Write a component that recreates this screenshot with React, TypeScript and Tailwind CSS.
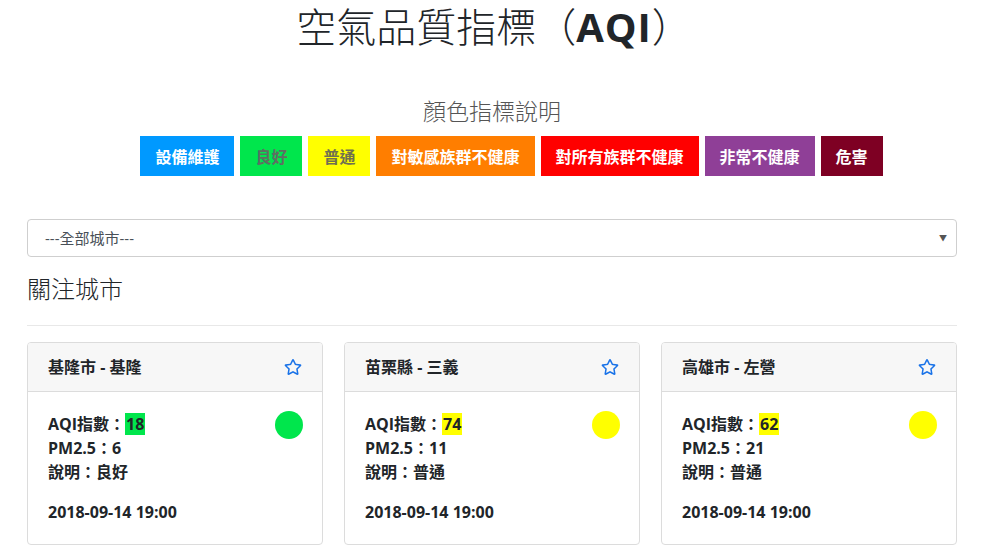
import React from "react";
import { FaRegStar } from "react-icons/fa";

const legend = [
  { t: "設備維護", bg: "bg-[#0099ff]", c: "text-white" },
  { t: "良好", bg: "bg-[#00e64c]", c: "text-[#5f6e63]" },
  { t: "普通", bg: "bg-[#ffff00]", c: "text-[#707050]" },
  { t: "對敏感族群不健康", bg: "bg-[#ff7e00]", c: "text-white" },
  { t: "對所有族群不健康", bg: "bg-[#ff0000]", c: "text-white" },
  { t: "非常不健康", bg: "bg-[#8f3f97]", c: "text-white" },
  { t: "危害", bg: "bg-[#7e0023]", c: "text-white" },
];

const cards = [
  { name: "基隆市 - 基隆", aqi: "18", pm: "6", desc: "良好", color: "bg-[#00e64c]" },
  { name: "苗栗縣 - 三義", aqi: "74", pm: "11", desc: "普通", color: "bg-[#ffff00]" },
  { name: "高雄市 - 左營", aqi: "62", pm: "21", desc: "普通", color: "bg-[#ffff00]" },
];

export default function App() {
  return (
    <div
      className="w-[998px] h-[554px] overflow-hidden bg-white text-[#212529]"
      style={{ fontFamily: '"Open Sans", "Noto Sans CJK TC", sans-serif' }}
    >
      <div className="ml-[27px] w-[930px]">
        <h1 className="text-center text-[40px] leading-[54px] font-light pl-[4px]">
          空氣品質指標（<span className="font-bold tracking-[1px]">AQI</span>）
        </h1>
        <h2 className="mt-[42px] text-center text-[23px] leading-[30px] font-light text-[#555]">
          顏色指標說明
        </h2>
        <div className="mt-[10px] flex justify-center gap-[6px] pl-[39px]">
          {legend.map((l) => (
            <div
              key={l.t}
              className={`${l.bg} ${l.c} h-[40px] px-[15px] flex items-center text-[16px] font-bold`}
              style={{ fontFamily: '"Noto Sans CJK TC", sans-serif' }}
            >
              {l.t}
            </div>
          ))}
        </div>
        <div className="mt-[43px] h-[38px] border border-[#cfcfcf] rounded-[4px] flex items-center justify-between pl-[17px] pr-[9px]">
          <span className="text-[15px] text-[#495057]">---全部城市---</span>
          <span className="text-[8px] text-[#555]">▼</span>
        </div>
        <h3 className="mt-[16px] text-[24px] leading-[32px] font-light">關注城市</h3>
        <div className="mt-[20px] border-t border-[#e8e8e8]" />
        <div className="mt-[16px] flex gap-[21px]">
          {cards.map((c) => (
            <div key={c.name} className="w-[296px] h-[203px] border border-[#dcdcdc] rounded-[4px] overflow-hidden">
              <div className="h-[49px] bg-[#f7f7f7] border-b border-[#dcdcdc] flex items-center justify-between px-[20px]">
                <span className="text-[16px] font-bold">{c.name}</span>
                <FaRegStar className="text-[#1a73e8]" size={18} />
              </div>
              <div className="px-[20px] pt-[20px] flex justify-between">
                <div className="text-[16px] font-bold leading-[24px]">
                  <div>
                    AQI指數：<span className={`${c.color} px-[1px]`}>{c.aqi}</span>
                  </div>
                  <div>PM2.5：{c.pm}</div>
                  <div>說明：{c.desc}</div>
                  <div className="mt-[16px]">2018-09-14 19:00</div>
                </div>
                <div className={`${c.color} w-[28px] h-[28px] rounded-full mt-[-1px] mr-[-1px]`} />
              </div>
            </div>
          ))}
        </div>
      </div>
    </div>
  );
}
